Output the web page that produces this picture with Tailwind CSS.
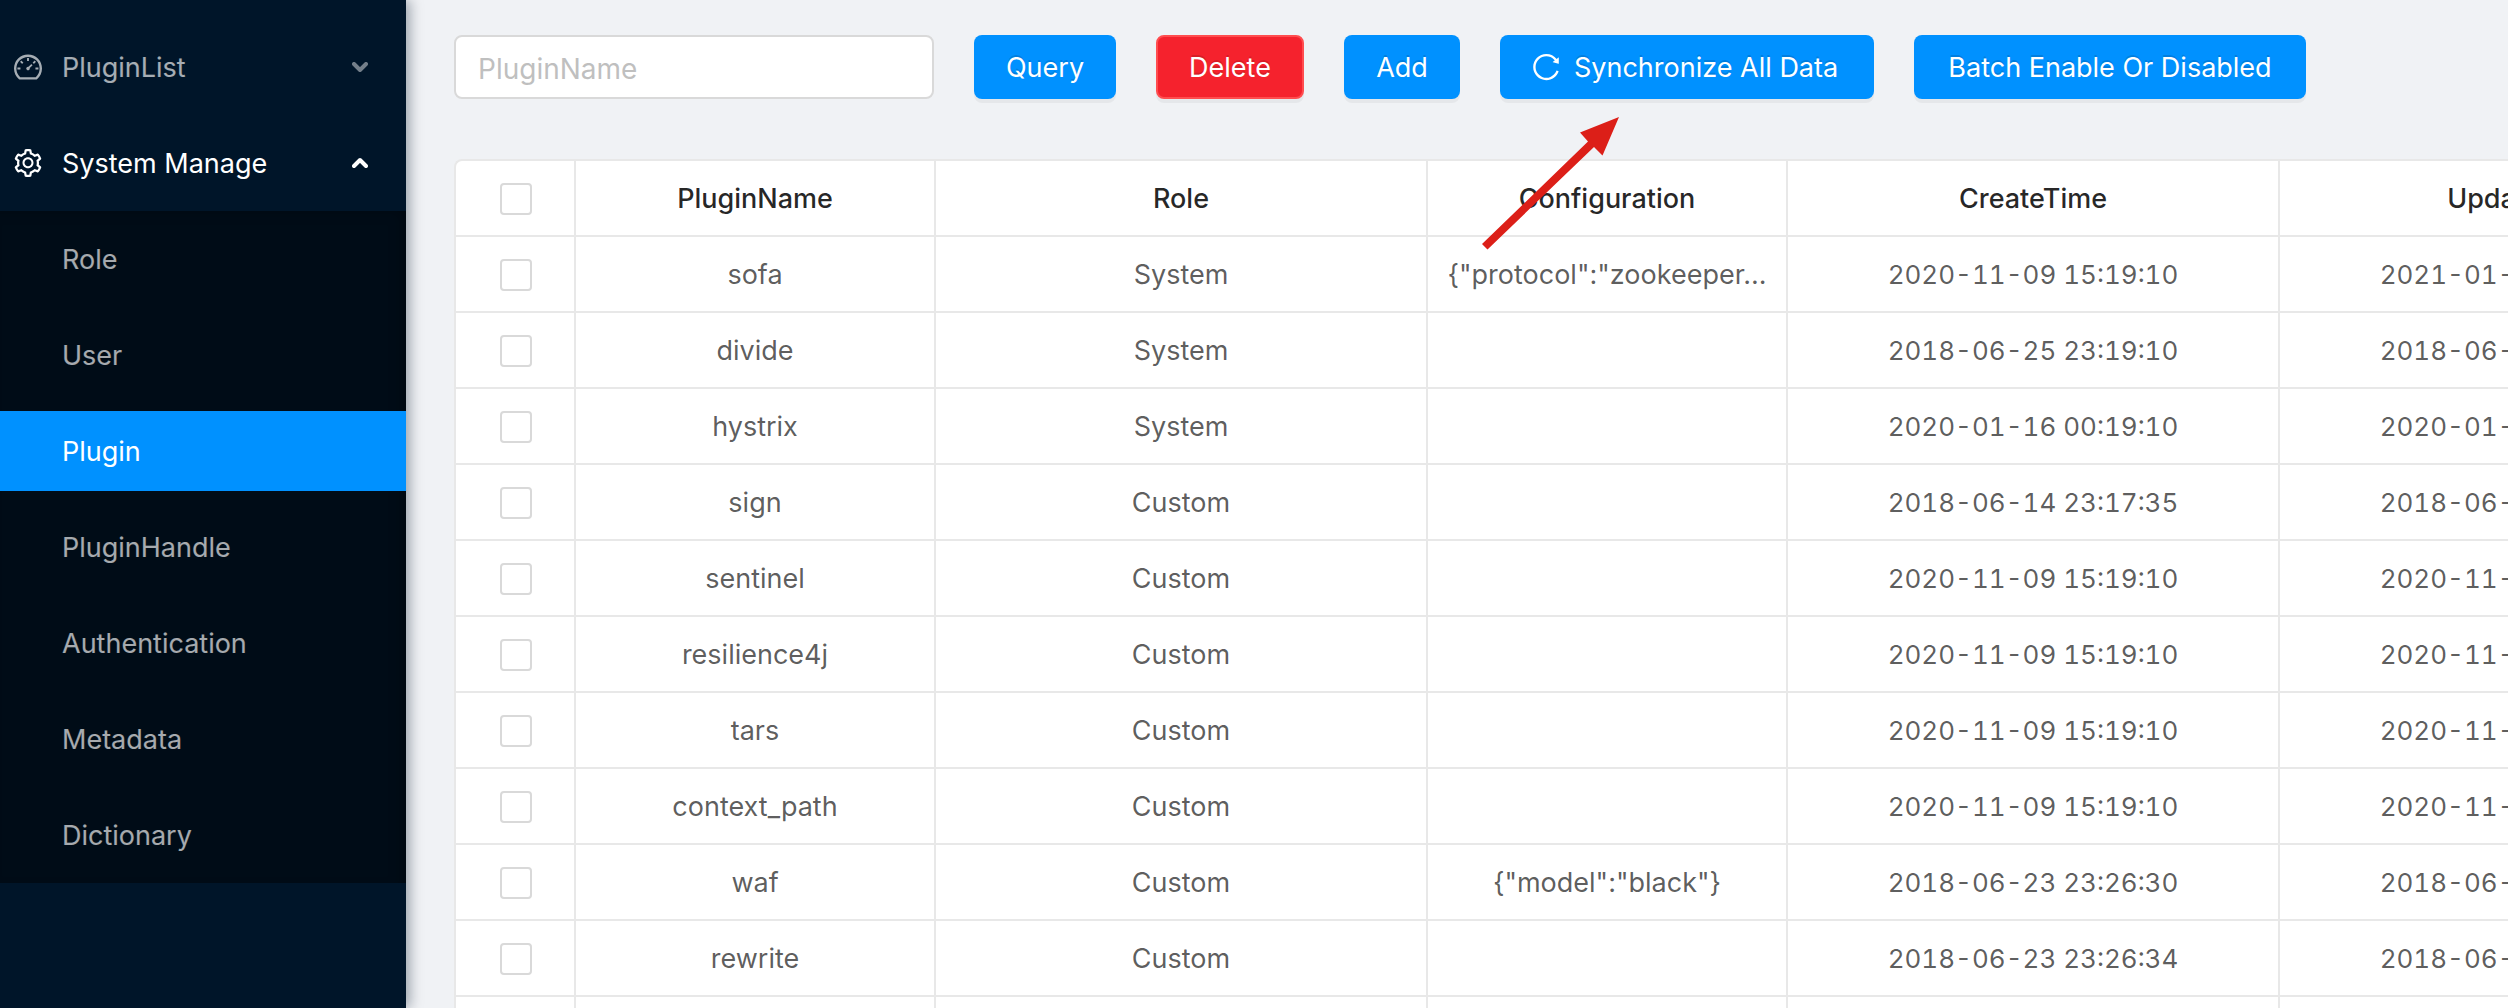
<!DOCTYPE html>
<html lang="en">
<head>
<meta charset="utf-8">
<title>Plugin - System Manage</title>
<script src="https://cdn.jsdelivr.net/npm/@tailwindcss/browser@4"></script>
</head>
<body class="bg-[#f0f2f5] font-['Inter','Liberation_Sans',sans-serif] text-[27px] leading-[42px] text-black/65">
<div class="flex h-screen overflow-hidden">

  <aside class="relative z-10 w-[406px] shrink-0 bg-[#001529] pt-[19px] text-white/65 shadow-[4px_0_12px_rgba(0,21,41,0.35)]">
    <nav aria-label="Main menu">
      <button type="button" aria-expanded="false" class="my-2 flex h-20 w-full items-center pr-[38px] pl-3 text-left">
        <svg class="mr-[18px] size-8 shrink-0" viewBox="0 0 1024 1024" fill="currentColor" aria-hidden="true"><path d="M924.8 385.6a446.7 446.7 0 0 0-96-142.4 446.7 446.7 0 0 0-142.4-96C631.1 123.8 572.5 112 512 112s-119.1 11.8-174.4 35.2a446.7 446.7 0 0 0-142.4 96 446.7 446.7 0 0 0-96 142.4C75.8 440.9 64 499.5 64 560c0 132.7 58.3 257.7 159.9 343.1l1.7 1.4c5.8 4.8 13.1 7.5 20.6 7.5h531.7c7.5 0 14.8-2.7 20.6-7.5l1.7-1.4C901.7 817.7 960 692.7 960 560c0-60.5-11.9-119.1-35.2-174.4zM761.4 836H262.6A371.12 371.12 0 0 1 140 560c0-99.4 38.7-192.8 109-263 70.3-70.3 163.7-109 263-109 99.4 0 192.8 38.7 263 109 70.3 70.3 109 163.7 109 263 0 105.6-44.5 205.5-122.6 276zM623.5 421.5a8.03 8.03 0 0 0-11.3 0L527.7 506c-18.7-5-39.4-.2-54.1 14.5a55.95 55.95 0 0 0 0 79.2 55.95 55.95 0 0 0 79.2 0 55.87 55.87 0 0 0 14.5-54.1l84.5-84.5c3.1-3.1 3.1-8.2 0-11.3l-28.3-28.3zM490 320h44c4.4 0 8-3.6 8-8v-80c0-4.4-3.6-8-8-8h-44c-4.4 0-8 3.6-8 8v80c0 4.4 3.6 8 8 8zm260 218v44c0 4.4 3.6 8 8 8h80c4.4 0 8-3.6 8-8v-44c0-4.4-3.6-8-8-8h-80c-4.4 0-8 3.6-8 8zm12.7-197.2l-31.1-31.1a8.03 8.03 0 0 0-11.3 0l-56.6 56.6a8.03 8.03 0 0 0 0 11.3l31.1 31.1c3.1 3.1 8.2 3.1 11.3 0l56.6-56.6c3.1-3.1 3.1-8.2 0-11.3zm-458.6-31.1a8.03 8.03 0 0 0-11.3 0l-31.1 31.1a8.03 8.03 0 0 0 0 11.3l56.6 56.6c3.1 3.1 8.2 3.1 11.3 0l31.1-31.1c3.1-3.1 3.1-8.2 0-11.3l-56.6-56.6zM262 530h-80c-4.4 0-8 3.6-8 8v44c0 4.4 3.6 8 8 8h80c4.4 0 8-3.6 8-8v-44c0-4.4-3.6-8-8-8z"/></svg>
        <span class="grow pt-0.5">PluginList</span>
        <svg class="h-3 w-4 shrink-0 opacity-70" viewBox="0 0 16 12" fill="none" stroke="currentColor" stroke-width="4" stroke-linecap="round" stroke-linejoin="round" aria-hidden="true"><path d="M2 3l6 6 6-6"/></svg>
      </button>
      <div class="pt-2">
        <button type="button" aria-expanded="true" class="mb-2 flex h-20 w-full items-center pr-[38px] pl-3 text-left text-white">
          <svg class="mr-[18px] size-8 shrink-0" viewBox="0 0 1024 1024" fill="currentColor" aria-hidden="true"><path d="M924.8 625.7l-65.5-56c3.1-19 4.7-38.4 4.7-57.8s-1.6-38.8-4.7-57.8l65.5-56a32.03 32.03 0 0 0 9.3-35.2l-.9-2.6a443.74 443.74 0 0 0-79.7-137.9l-1.8-2.1a32.12 32.12 0 0 0-35.1-9.5l-81.3 28.9c-30-24.6-63.5-44-99.7-57.6l-15.7-85a32.05 32.05 0 0 0-25.8-25.7l-2.7-.5c-52.1-9.4-106.9-9.4-159 0l-2.7.5a32.05 32.05 0 0 0-25.8 25.7l-15.8 85.4a351.86 351.86 0 0 0-99 57.4l-81.9-29.1a32 32 0 0 0-35.1 9.5l-1.8 2.1a446.02 446.02 0 0 0-79.7 137.9l-.9 2.6c-4.5 12.5-.8 26.5 9.3 35.2l66.3 56.6c-3.1 18.8-4.6 38-4.6 57.1 0 19.2 1.5 38.4 4.6 57.1L99 625.5a32.03 32.03 0 0 0-9.3 35.2l.9 2.6c18.1 50.4 44.9 96.9 79.7 137.9l1.8 2.1a32.12 32.12 0 0 0 35.1 9.5l81.9-29.1c29.8 24.5 63.1 43.9 99 57.4l15.8 85.4a32.05 32.05 0 0 0 25.8 25.7l2.7.5a449.4 449.4 0 0 0 159 0l2.7-.5a32.05 32.05 0 0 0 25.8-25.7l15.7-85a350 350 0 0 0 99.7-57.6l81.3 28.9a32 32 0 0 0 35.1-9.5l1.8-2.1c34.8-41.1 61.6-87.5 79.7-137.9l.9-2.6c4.5-12.3.8-26.3-9.3-35zM788.3 465.9c2.5 15.1 3.8 30.6 3.8 46.1s-1.3 31-3.8 46.1l-6.6 40.1 74.7 63.9a370.03 370.03 0 0 1-42.6 73.6L721 702.8l-31.4 25.8c-23.9 19.6-50.5 35-79.3 45.8l-38.1 14.3-17.9 97a377.5 377.5 0 0 1-85 0l-17.9-97.2-37.8-14.5c-28.5-10.8-55-26.2-78.7-45.7l-31.4-25.9-93.4 33.2c-17-22.9-31.2-47.6-42.6-73.6l75.5-64.5-6.5-40c-2.4-14.9-3.7-30.3-3.7-45.5 0-15.3 1.2-30.6 3.7-45.5l6.5-40-75.5-64.5c11.3-26.1 25.6-50.7 42.6-73.6l93.4 33.2 31.4-25.9c23.7-19.5 50.2-34.9 78.7-45.7l37.9-14.3 17.9-97.2c28.1-3.2 56.8-3.2 85 0l17.9 97 38.1 14.3c28.7 10.8 55.4 26.2 79.3 45.8l31.4 25.8 92.8-32.9c17 22.9 31.2 47.6 42.6 73.6L781.8 426l6.5 39.9zM512 326c-97.2 0-176 78.8-176 176s78.8 176 176 176 176-78.8 176-176-78.8-176-176-176zm79.2 255.2A111.6 111.6 0 0 1 512 614c-29.9 0-58-11.7-79.2-32.8A111.6 111.6 0 0 1 400 502c0-29.9 11.7-58 32.8-79.2C454 401.6 482.1 390 512 390c29.9 0 58 11.6 79.2 32.8A111.6 111.6 0 0 1 624 502c0 29.9-11.7 58-32.8 79.2z"/></svg>
          <span class="grow pt-0.5">System Manage</span>
          <svg class="h-3 w-4 shrink-0" viewBox="0 0 16 12" fill="none" stroke="currentColor" stroke-width="4" stroke-linecap="round" stroke-linejoin="round" aria-hidden="true"><path d="M2 9l6-6 6 6"/></svg>
        </button>
        <ul class="flex flex-col gap-4 bg-[#000c17] py-2 shadow-[inset_-8px_4px_16px_-8px_rgba(0,0,0,0.45)]">
          <li><a href="#role" class="flex h-20 items-center pt-0.5 pl-[62px]">Role</a></li>
          <li><a href="#user" class="flex h-20 items-center pt-0.5 pl-[62px]">User</a></li>
          <li><a href="#plugin" aria-current="page" class="flex h-20 items-center bg-[#0091ff] pt-0.5 pl-[62px] text-white">Plugin</a></li>
          <li><a href="#plugin-handle" class="flex h-20 items-center pt-0.5 pl-[62px]">PluginHandle</a></li>
          <li><a href="#authentication" class="flex h-20 items-center pt-0.5 pl-[62px]">Authentication</a></li>
          <li><a href="#metadata" class="flex h-20 items-center pt-0.5 pl-[62px]">Metadata</a></li>
          <li><a href="#dictionary" class="flex h-20 items-center pt-0.5 pl-[62px]">Dictionary</a></li>
        </ul>
      </div>
    </nav>
  </aside>

  <main class="min-w-0 grow overflow-hidden pt-[35px] pl-12">
    <div class="flex gap-10 whitespace-nowrap text-white">
      <input type="text" aria-label="PluginName" placeholder="PluginName" class="h-16 w-[480px] rounded-lg border-2 border-[#d9d9d9] bg-white px-[22px] pt-1 text-[28px] text-black/65 placeholder:text-[#bfbfbf]">
      <button type="button" class="h-16 w-[142px] rounded-lg bg-[#0091ff] pt-0.5 shadow-[0_4px_0_rgba(0,0,0,0.045)] [text-shadow:0_-2px_0_rgba(0,0,0,0.12)]">Query</button>
      <button type="button" class="h-16 w-[148px] rounded-lg border-2 border-[#ff4d4f] bg-[#f5222d] pt-0.5 shadow-[0_4px_0_rgba(0,0,0,0.045)] [text-shadow:0_-2px_0_rgba(0,0,0,0.12)]">Delete</button>
      <button type="button" class="h-16 w-[116px] rounded-lg bg-[#0091ff] pt-0.5 shadow-[0_4px_0_rgba(0,0,0,0.045)] [text-shadow:0_-2px_0_rgba(0,0,0,0.12)]">Add</button>
      <div class="relative">
        <button type="button" class="flex h-16 w-[374px] items-center gap-3 rounded-lg bg-[#0091ff] pl-[30px] shadow-[0_4px_0_rgba(0,0,0,0.045)] [text-shadow:0_-2px_0_rgba(0,0,0,0.12)]">
          <svg class="size-8 shrink-0" viewBox="0 0 1024 1024" fill="currentColor" aria-hidden="true"><path d="M909.1 209.3l-56.4 44.1C775.8 155.1 656.2 92 521.9 92 290 92 102.3 279.5 102 511.5 101.7 743.7 289.8 932 521.9 932c181.3 0 335.8-115 394.6-276.1 1.5-4.2-.7-8.9-4.9-10.3l-56.7-19.5a8 8 0 0 0-10.1 4.8c-1.8 5-3.8 10-5.9 14.9-17.3 41-42.1 77.8-73.7 109.4A344.77 344.77 0 0 1 655.9 829c-42.3 17.9-87.4 27-133.8 27-46.5 0-91.5-9.1-133.8-27A341.5 341.5 0 0 1 279 755.2a342.16 342.16 0 0 1-73.7-109.4c-17.9-42.4-27-87.4-27-133.9s9.1-91.5 27-133.9c17.3-41 42.1-77.8 73.7-109.4 31.6-31.6 68.4-56.4 109.3-73.8 42.3-17.9 87.4-27 133.8-27 46.5 0 91.5 9.1 133.8 27a341.5 341.5 0 0 1 109.3 73.8c9.9 9.9 19.2 20.4 27.8 31.4l-60.2 47a8 8 0 0 0 3 14.1l175.6 43c5 1.2 9.9-2.6 9.9-7.7l.8-180.9c-.1-6.6-7.8-10.3-13-6.2z"/></svg>
          <span class="pt-0.5">Synchronize All Data</span>
        </button>
        <svg class="absolute top-full -left-[18px] z-10 mt-[18px] h-[133px] w-[137px]" viewBox="0 0 137 133" fill="#dc1f18" aria-hidden="true"><polygon points="137,0 98,15.5 106,24.5 0,127 5.5,132.5 112,30 120.5,38.5"/></svg>
      </div>
      <button type="button" class="h-16 w-[392px] rounded-lg bg-[#0091ff] pt-0.5 shadow-[0_4px_0_rgba(0,0,0,0.045)] [text-shadow:0_-2px_0_rgba(0,0,0,0.12)]">Batch Enable Or Disabled</button>
    </div>

    <table class="mt-15 w-[2318px] table-fixed border-separate border-spacing-0 rounded-tl-lg border-t-2 border-l-2 border-[#e8e8e8] bg-white text-center whitespace-nowrap">
      <colgroup>
        <col class="w-[120px]"><col class="w-[360px]"><col class="w-[492px]"><col class="w-[360px]"><col class="w-[492px]"><col class="w-[492px]">
      </colgroup>
      <thead class="text-black/85">
        <tr class="h-19">
          <th class="border-r-2 border-b-2 border-[#e8e8e8] p-0 pt-0.5 pl-0.5"><input type="checkbox" aria-label="Select all" class="block mx-auto size-8 appearance-none rounded-sm border-2 border-[#d9d9d9] bg-white"></th>
          <th class="border-r-2 border-b-2 border-[#e8e8e8] p-0 pt-0.5 font-medium">PluginName</th>
          <th class="border-r-2 border-b-2 border-[#e8e8e8] p-0 pt-0.5 font-medium">Role</th>
          <th class="border-r-2 border-b-2 border-[#e8e8e8] p-0 pt-0.5 font-medium">Configuration</th>
          <th class="border-r-2 border-b-2 border-[#e8e8e8] p-0 pt-0.5 font-medium">CreateTime</th>
          <th class="border-r-2 border-b-2 border-[#e8e8e8] p-0 pt-0.5 font-medium">UpdateTime</th>
        </tr>
      </thead>
      <tbody id="rows"></tbody>
    </table>
  </main>
</div>

<script>
  const plugins = [
    ['sofa', 'System', '{"protocol":"zookeeper...', '2020-11-09 15:19:10', '2021-01-09 15:19:10'],
    ['divide', 'System', '', '2018-06-25 23:19:10', '2018-06-25 23:19:10'],
    ['hystrix', 'System', '', '2020-01-16 00:19:10', '2020-01-16 00:19:10'],
    ['sign', 'Custom', '', '2018-06-14 23:17:35', '2018-06-14 23:17:35'],
    ['sentinel', 'Custom', '', '2020-11-09 15:19:10', '2020-11-09 15:19:10'],
    ['resilience4j', 'Custom', '', '2020-11-09 15:19:10', '2020-11-09 15:19:10'],
    ['tars', 'Custom', '', '2020-11-09 15:19:10', '2020-11-09 15:19:10'],
    ['context_path', 'Custom', '', '2020-11-09 15:19:10', '2020-11-09 15:19:10'],
    ['waf', 'Custom', '{"model":"black"}', '2018-06-23 23:26:30', '2018-06-23 23:26:30'],
    ['rewrite', 'Custom', '', '2018-06-23 23:26:34', '2018-06-23 23:26:34'],
    ['', '', '', '', '']
  ];
  const cell = 'border-r-2 border-b-2 border-[#e8e8e8] p-0 pt-0.5';
  const dateCell = cell + ' text-[26px] tabular-nums';
  document.getElementById('rows').innerHTML = plugins.map(([name, role, config, created, updated]) => `
    <tr class="h-19">
      <td class="${cell} pl-0.5"><input type="checkbox" aria-label="Select ${name}" class="block mx-auto size-8 appearance-none rounded-sm border-2 border-[#d9d9d9] bg-white"></td>
      <td class="${cell}">${name}</td>
      <td class="${cell}">${role}</td>
      <td class="${cell}">${config}</td>
      <td class="${dateCell}">${created}</td>
      <td class="${dateCell}">${updated}</td>
    </tr>`).join('');
</script>
</body>
</html>
